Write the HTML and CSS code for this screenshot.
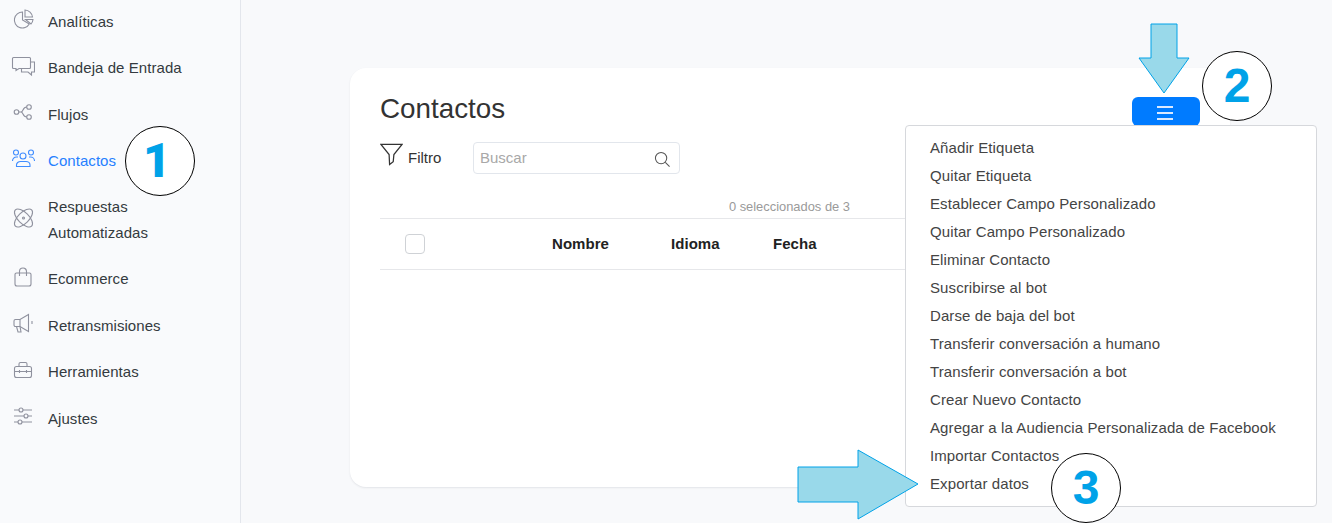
FILE: index.html
```html
<!DOCTYPE html>
<html lang="es">
<head>
<meta charset="utf-8">
<title>Contactos</title>
<link rel="stylesheet" href="styles.css">
</head>
<body>
<div class="app">
  <aside class="sidebar">
    <nav class="nav">
      <a class="nav-item">
        <svg class="icon" viewBox="0 0 24 24"><path d="M11.5 5A8 8 0 1 0 18.3 17L11.5 13Z"/><path d="M14 3A8 8 0 0 1 21.5 10H14Z"/><path d="M14.5 12.5H22A8 8 0 0 1 20 17Z"/></svg>
        <span>Analíticas</span>
      </a>
      <a class="nav-item">
        <svg class="icon" viewBox="0 0 24 24"><path d="M2.5 3.5H18.5A1 1 0 0 1 19.5 4.500V13.500A1 1 0 0 1 18.500 14.500H8L5 16.500V14.500H2.500A1 1 0 0 1 1.500 13.500V4.500A1 1 0 0 1 2.500 3.500Z"/><path d="M20 8H23.500V18H20.500V21L17 18H10.500V15"/></svg>
        <span>Bandeja de Entrada</span>
      </a>
      <a class="nav-item">
        <svg class="icon" viewBox="0 0 24 24"><circle cx="5.500" cy="12" r="2.300"/><circle cx="18" cy="7" r="2.300"/><circle cx="18" cy="17" r="2.300"/><path d="M7.800 12H10C12.500 12 11.500 7 15.700 7M10 12C12.500 12 11.500 17 15.700 17"/></svg>
        <span>Flujos</span>
      </a>
      <a class="nav-item nav-item-active">
        <svg class="icon" viewBox="0 0 24 24"><circle cx="5" cy="6.500" r="2.500"/><circle cx="12" cy="10" r="3"/><circle cx="20" cy="6.500" r="2.500"/><path d="M5.500 20.500V19A4 3.500 0 0 1 9.500 15.500H15A4 3.500 0 0 1 19 19V20.500Z"/><path d="M1.500 15A4 4 0 0 1 5.500 11H7M23.500 15A4 4 0 0 0 19.500 11H18"/></svg>
        <span>Contactos</span>
      </a>
      <a class="nav-item nav-item-multi">
        <svg class="icon" viewBox="0 0 24 24"><ellipse cx="12.500" cy="12" rx="11.500" ry="5.500" transform="rotate(45 12.500 12)"/><ellipse cx="12.500" cy="12" rx="11.500" ry="5.500" transform="rotate(-45 12.500 12)"/><circle cx="12.500" cy="12" r="1"/></svg>
        <span>Respuestas<br>Automatizadas</span>
      </a>
      <a class="nav-item">
        <svg class="icon" viewBox="0 0 24 24"><path d="M5.500 8H18.500A1.500 1.500 0 0 1 20 9.500V19A2 2 0 0 1 18 21H6A2 2 0 0 1 4 19V9.500A1.500 1.500 0 0 1 5.500 8Z"/><path d="M8.500 11V6.500A3.500 3.500 0 0 1 15.500 6.500V11"/></svg>
        <span>Ecommerce</span>
      </a>
      <a class="nav-item">
        <svg class="icon" viewBox="0 0 24 24"><path d="M17.500 3.500L9 8.500H4.500A1.500 1.500 0 0 0 3 10V14A1.500 1.500 0 0 0 4.500 15.500H9L17.500 20.500Z"/><path d="M9 8.500V15.500M5.500 15.500L7 21H10L9 15.500"/><path d="M21 10V13"/></svg>
        <span>Retransmisiones</span>
      </a>
      <a class="nav-item">
        <svg class="icon" viewBox="0 0 24 24"><rect x="3.500" y="8.500" width="17" height="11" rx="2"/><path d="M8 8.500V6A1.500 1.500 0 0 1 9.500 4.500H14.500A1.500 1.500 0 0 1 16 6V8.500"/><path d="M3.500 13.500H20.500M8.500 12V15M15.500 12V15"/></svg>
        <span>Herramientas</span>
      </a>
      <a class="nav-item">
        <svg class="icon" viewBox="0 0 24 24"><path d="M3 6H21M3 12H21M3 18H21"/><circle class="knob" cx="10" cy="6" r="2"/><circle class="knob" cx="15" cy="12" r="2"/><circle class="knob" cx="9" cy="18" r="2"/></svg>
        <span>Ajustes</span>
      </a>
    </nav>
  </aside>

  <main class="main">
    <section class="card">
      <header class="card-head">
        <h1 class="title">Contactos</h1>
        <button class="menu-btn" type="button" aria-label="Menú">
          <span></span><span></span><span></span>
        </button>
      </header>

      <div class="toolbar">
        <div class="filter">
          <svg class="filter-icon" viewBox="0 0 24 24"><path d="M1 1.500H23L14.500 12L13.800 19.500L10 22.500L9.500 12Z"/></svg>
          <span class="filter-label">Filtro</span>
        </div>
        <label class="search">
          <input class="search-input" type="text" placeholder="Buscar">
          <svg class="search-icon" viewBox="0 0 18 18"><circle cx="7.500" cy="7.500" r="6"/><path d="M12 12L16.500 16.500"/></svg>
        </label>
      </div>

      <p class="count">0 seleccionados de 3</p>

      <div class="table-head">
        <div class="cell-check"><span class="checkbox"></span></div>
        <div class="cell-label">Nombre</div>
        <div class="cell-label">Idioma</div>
        <div class="cell-label">Fecha</div>
      </div>

      <ul class="dropdown">
        <li>Añadir Etiqueta</li>
        <li>Quitar Etiqueta</li>
        <li>Establecer Campo Personalizado</li>
        <li>Quitar Campo Personalizado</li>
        <li>Eliminar Contacto</li>
        <li>Suscribirse al bot</li>
        <li>Darse de baja del bot</li>
        <li>Transferir conversación a humano</li>
        <li>Transferir conversación a bot</li>
        <li>Crear Nuevo Contacto</li>
        <li>Agregar a la Audiencia Personalizada de Facebook</li>
        <li>Importar Contactos</li>
        <li>Exportar datos</li>
      </ul>
    </section>
  </main>
</div>

<svg class="arrow arrow-down" viewBox="0 0 52 71"><path d="M13 1H39V35H51L26 70L1 35H13Z"/></svg>
<svg class="arrow arrow-right" viewBox="0 0 122 71"><path d="M1 18H61V1L121 35L61 70V53H1Z"/></svg>
<div class="step step-1">1</div>
<div class="step step-2">2</div>
<div class="step step-3">3</div>
</body>
</html>
```

FILE: styles.css
```css
* { box-sizing: border-box; }

html, body {
  margin: 0;
  height: 100%;
  overflow: hidden;
}

body {
  position: relative;
  background: #f8f9fb;
  color: #343a40;
  font-family: "Liberation Sans", Arial, sans-serif;
  font-size: 15px;
}

.app {
  display: flex;
  height: 523px;
}

/* Sidebar */
.sidebar {
  flex: 0 0 241px;
  background: #f9fafc;
  border-right: 1px solid #e3e6ec;
}

.nav {
  display: flex;
  flex-direction: column;
  gap: 20.4px;
  padding: 8.8px 0 0 11px;
}

.nav-item {
  display: flex;
  align-items: center;
  gap: 13px;
  line-height: 26px;
  letter-spacing: 0.06px;
  color: #343a40;
}

.nav-item-multi { margin-bottom: -0.4px; }

.nav-item-active { color: #2680ff; }

.icon {
  flex: 0 0 24px;
  width: 24px;
  height: 24px;
  margin-top: -5px;
  fill: none;
  stroke: #8f919e;
  stroke-width: 1.1;
}

.nav-item-active .icon { stroke: #3f8cff; }

.knob { fill: #f9fafc; }

/* Main */
.main {
  flex: 1;
  padding: 68px 0 0 109px;
}

.card {
  position: relative;
  width: 880px;
  height: 419px;
  padding: 23px 30px 0;
  background: #fff;
  border-radius: 16px;
  box-shadow: 0 1px 2px rgba(40, 50, 70, 0.1);
}

.card-head {
  display: flex;
  justify-content: space-between;
  align-items: flex-end;
}

.title {
  margin: 0;
  font-size: 27.8px;
  font-weight: 400;
  line-height: 35px;
  color: #333;
}

.menu-btn {
  display: flex;
  flex-direction: column;
  align-items: center;
  justify-content: center;
  gap: 4px;
  width: 68px;
  height: 29px;
  padding: 2px 2px 0 0;
  border: 0;
  border-radius: 6px;
  background: #007bff;
}

.menu-btn span {
  width: 16px;
  height: 2px;
  background: #dbe9ff;
}

/* Toolbar */
.toolbar {
  display: flex;
  align-items: center;
  margin-top: 16px;
  height: 32px;
}

.filter {
  display: flex;
  align-items: center;
  gap: 5px;
  width: 93px;
  color: #333;
}

.filter-label { margin-top: -2px; }

.filter-icon {
  width: 23px;
  height: 23px;
  margin-top: -8px;
  fill: none;
  stroke: #333;
  stroke-width: 1.3;
}

.search {
  display: flex;
  align-items: center;
  width: 207px;
  height: 32px;
  padding: 0 8px 0 6px;
  border: 1px solid #e2e6ec;
  border-radius: 4px;
  background: #fff;
}

.search-input {
  flex: 1;
  min-width: 0;
  padding: 0 0 2px;
  border: 0;
  outline: 0;
  background: transparent;
  font: inherit;
  color: #333;
}

.search-input::placeholder {
  color: #a8a8a8;
  opacity: 1;
}

.search-icon {
  width: 17px;
  height: 17px;
  margin-top: 2px;
  fill: none;
  stroke: #555;
  stroke-width: 1.1;
}

.count {
  margin: 23px 0 1px;
  padding-right: 350px;
  font-size: 12.9px;
  line-height: 20px;
  text-align: right;
  color: #9a9a9a;
}

/* Table */
.table-head {
  display: grid;
  grid-template-columns: 172px 119px 102px 1fr;
  align-items: center;
  height: 52px;
  border-top: 1px solid #e6e7ea;
  border-bottom: 1px solid #e6e7ea;
  font-weight: 700;
  letter-spacing: 0.05px;
  color: #222;
}

.cell-label { padding-bottom: 2px; }

.cell-check {
  display: flex;
  padding-left: 25px;
}

.checkbox {
  width: 20px;
  height: 20px;
  border: 1px solid #cfd2d6;
  border-radius: 4px;
  background: #fff;
}

/* Dropdown */
.dropdown {
  position: absolute;
  left: 555px;
  top: 57px;
  width: 412px;
  margin: 0;
  padding: 8px 0;
  list-style: none;
  background: #fff;
  border: 1px solid #d6d8dc;
  border-radius: 4px;
}

.dropdown li {
  height: 28px;
  padding-left: 24px;
  line-height: 28px;
  letter-spacing: 0.1px;
  white-space: nowrap;
  color: #444;
}

/* Annotations */
.arrow {
  position: absolute;
  fill: #99d9ea;
  stroke: #00a2e8;
  stroke-width: 1;
}

.arrow-down {
  left: 1138px;
  top: 23px;
  width: 52px;
  height: 71px;
}

.arrow-right {
  left: 797px;
  top: 449px;
  width: 122px;
  height: 71px;
}

.step {
  position: absolute;
  display: flex;
  align-items: center;
  justify-content: center;
  width: 70px;
  height: 70px;
  border: 1px solid #000;
  border-radius: 50%;
  background: #fff;
  color: #00a2e8;
  font-size: 48px;
  font-weight: 700;
  line-height: 1;
}

.step-1 {
  left: 125px;
  top: 126px;
  padding-right: 6px;
  font-family: Roboto, "Liberation Sans", sans-serif;
  font-weight: 900;
}

.step-2 { left: 1202px; top: 51px; }
.step-3 { left: 1051px; top: 453px; }
```
